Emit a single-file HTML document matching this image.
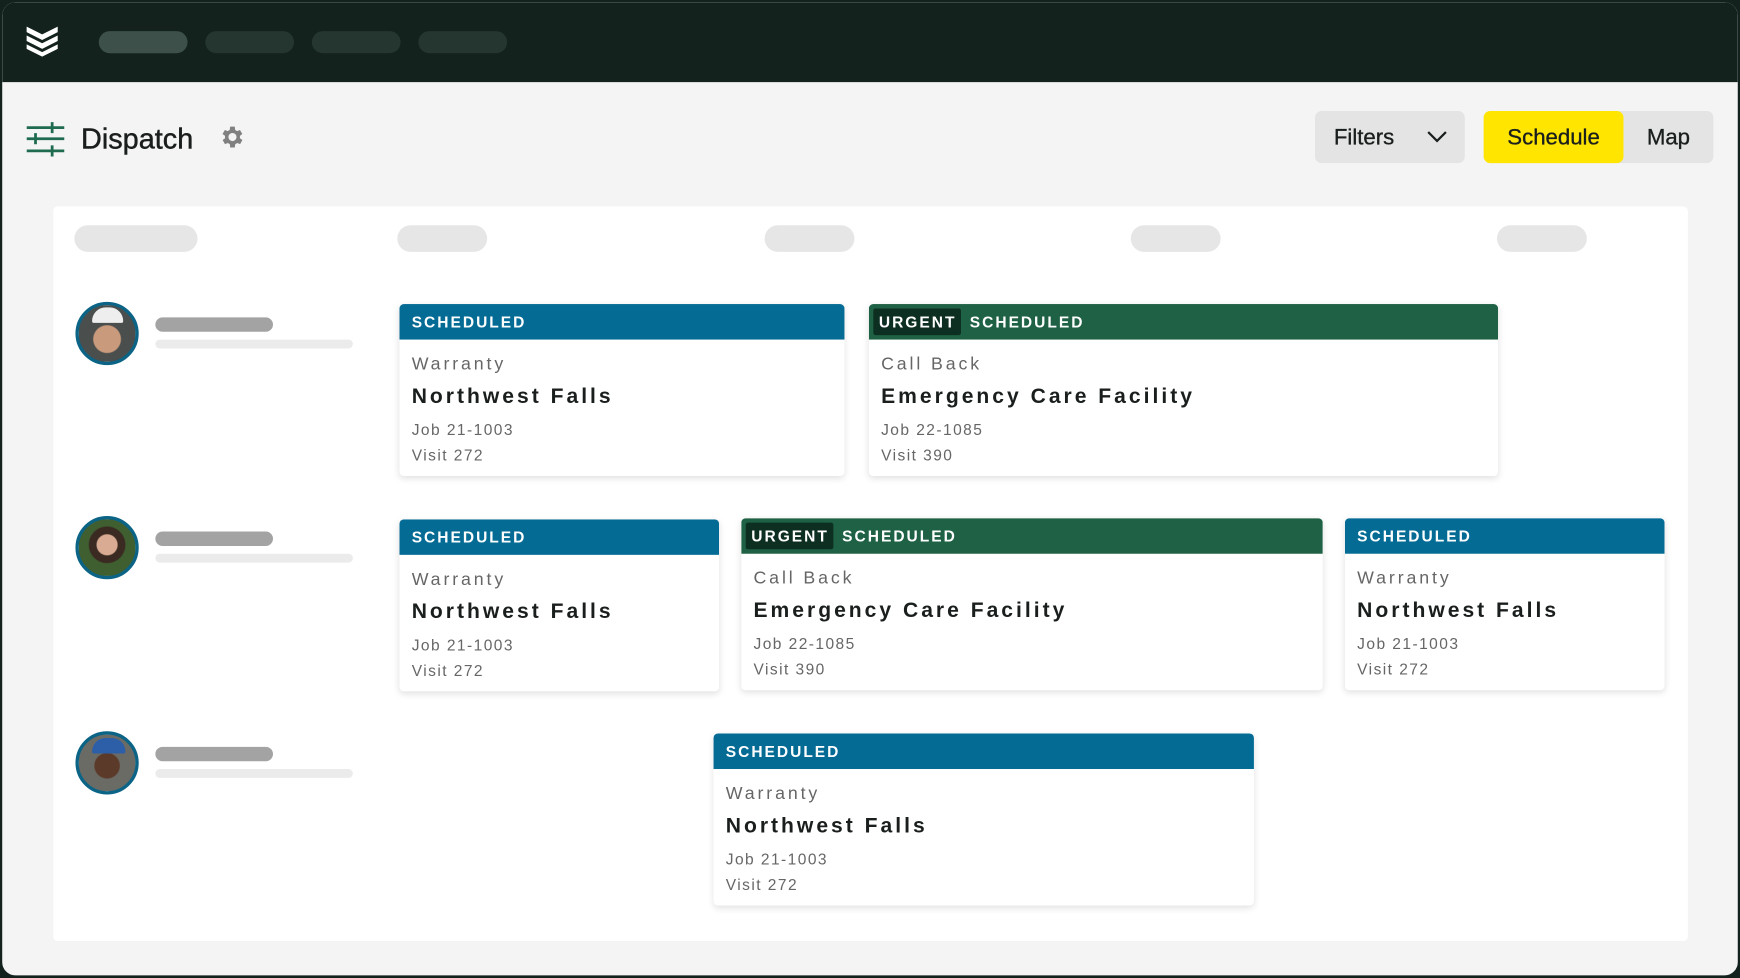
<!DOCTYPE html>
<html><head><meta charset="utf-8"><style>
*{margin:0;padding:0;box-sizing:border-box}
html,body{width:1740px;height:978px;overflow:hidden;background:#13221d}
#s{position:absolute;left:0;top:0;width:1568px;height:881px;transform:scale(1.10969);transform-origin:0 0;font-family:"Liberation Sans",sans-serif}
.win{position:absolute;left:0;top:0;width:1568px;height:881px;border-radius:14px;overflow:hidden;background:#f4f4f4;border:2px solid #13221d}
.top{position:absolute;left:0;top:0;width:100%;height:72px;background:#13221d}
.p{position:absolute;height:20px;border-radius:10px;background:#25352f;top:26px}
.a{position:absolute}
.panel{position:absolute;left:46px;top:184px;width:1473px;height:662px;background:#fff;border-radius:4px}
.sk{position:absolute;height:24px;border-radius:12px;background:#e6e6e6;top:201px}
.card{position:absolute;background:#fff;border-radius:4px;box-shadow:0 2px 6px rgba(0,0,0,.12);overflow:hidden}
.hd{height:32px;color:#fff;font-weight:bold;font-size:14px;letter-spacing:1.8px;line-height:32px;padding-left:11px}
.bl{background:#046b95}.gr{background:#1e6145;padding-left:4px}
.ug{display:inline-block;background:#0d2f22;height:24px;line-height:24px;padding:0 4px 0 5px;margin-right:8px;border-radius:2px;vertical-align:0px}
.t1{position:absolute;left:11px;top:46px;font-size:16px;color:#666;letter-spacing:2.6px}
.t2{position:absolute;left:11px;top:73px;font-size:19px;font-weight:bold;color:#1a1f1d;letter-spacing:2.7px}
.t3{position:absolute;left:11px;top:102px;font-size:14px;color:#666;letter-spacing:1.3px;line-height:23px}
.av{position:absolute;left:66px;width:57px;height:57px;border-radius:50%;border:3px solid #0b6486;overflow:hidden}
.b1{position:absolute;left:138px;width:106px;height:13px;border-radius:7px;background:#a3a3a3}
.b2{position:absolute;left:138px;width:178px;height:8px;border-radius:4px;background:#ebebeb}
.btn{position:absolute;top:98px;height:47px;font-size:20px;color:#1a1f1d;line-height:49px}
</style></head><body><div id="s"><div class="win">
<div class="top">
<svg class="a" style="left:21px;top:20px" width="30" height="30" viewBox="0 0 30 30"><g fill="#fff"><path d="M1 2 L15 9 L29 2 L29 7 L15 14 L1 7Z"/><path d="M1 10 L15 17 L29 10 L29 15 L15 22 L1 15Z"/><path d="M1 18 L15 25 L29 18 L29 22 L15 29 L1 22Z"/></g></svg>
<div class="p" style="left:87px;width:80px;background:#3e504a"></div>
<div class="p" style="left:183px;width:80px"></div>
<div class="p" style="left:279px;width:80px"></div>
<div class="p" style="left:375px;width:80px"></div>
</div>
<svg class="a" style="left:22px;top:106px" width="34" height="34" viewBox="0 0 34 34" stroke="#1e6b4f" stroke-width="2.5" fill="none"><path d="M0 7H34M0 17H34M0 28H34M23 2V12M8 12V22M23 23V33"/></svg>
<div class="a" style="left:71px;top:108px;font-size:26px;color:#1a1f1d;-webkit-text-stroke:0.4px #1a1f1d">Dispatch</div>
<svg class="a" style="left:195px;top:109px" width="25" height="25" viewBox="0 0 24 24"><path fill="#808080" d="M19.4 13a7.5 7.5 0 0 0 0-2l2.1-1.6-2-3.5-2.5 1a7 7 0 0 0-1.7-1L15 3h-4l-.4 2.9a7 7 0 0 0-1.7 1l-2.5-1-2 3.5L6.6 11a7.5 7.5 0 0 0 0 2l-2.1 1.6 2 3.5 2.5-1a7 7 0 0 0 1.7 1L11 21h4l.4-2.9a7 7 0 0 0 1.7-1l2.5 1 2-3.5zM13 15.5a3.5 3.5 0 1 1 0-7 3.5 3.5 0 0 1 0 7z" transform="translate(-1 0)"/></svg>
<div class="btn" style="left:1183px;width:135px;background:#e4e4e4;border-radius:6px;padding-left:17px;-webkit-text-stroke:0.3px #1a1f1d">Filters<svg class="a" style="left:101px;top:17px" width="18" height="12" viewBox="0 0 18 12"><path d="M1 2L9 10L17 2" stroke="#1a1f1d" stroke-width="2" fill="none"/></svg></div>
<div class="btn" style="left:1335px;width:207px;background:#e4e4e4;border-radius:6px"></div>
<div class="btn" style="left:1335px;width:126px;background:#ffe500;border-radius:6px;text-align:center;-webkit-text-stroke:0.3px #1a1f1d">Schedule</div>
<div class="btn" style="left:1461px;width:81px;text-align:center;-webkit-text-stroke:0.3px #1a1f1d">Map</div>
<div class="panel"></div>
<div class="sk" style="left:65px;width:111px"></div>
<div class="sk" style="left:356px;width:81px"></div>
<div class="sk" style="left:687px;width:81px"></div>
<div class="sk" style="left:1017px;width:81px"></div>
<div class="sk" style="left:1347px;width:81px"></div>

<div class="av" style="top:270px;background:radial-gradient(circle at 50% 60%,#c99a7c 0 12px,#4a4e4d 13px)"><div style="position:absolute;left:12px;top:2px;width:28px;height:14px;border-radius:14px 14px 2px 2px;background:#eee"></div></div>
<div class="b1" style="top:284px"></div><div class="b2" style="top:304px"></div>
<div class="av" style="top:463px;background:radial-gradient(circle at 50% 45%,#d8ab92 0 9px,#3a2a22 10px 16px,#3f5f30 17px)"></div>
<div class="b1" style="top:477px"></div><div class="b2" style="top:497px"></div>
<div class="av" style="top:657px;background:radial-gradient(circle at 50% 55%,#5b3a2a 0 11px,#6b6b66 12px)"><div style="position:absolute;left:12px;top:3px;width:30px;height:14px;border-radius:14px 14px 2px 2px;background:#2d5fa8"></div></div>
<div class="b1" style="top:671px"></div><div class="b2" style="top:691px"></div>

<div class="card" style="left:358px;top:272px;width:401px;height:155px"><div class="hd bl">SCHEDULED</div><div class="t1">Warranty</div><div class="t2">Northwest Falls</div><div class="t3">Job 21-1003<br>Visit 272</div></div>
<div class="card" style="left:781px;top:272px;width:567px;height:155px"><div class="hd gr"><span class="ug">URGENT</span>SCHEDULED</div><div class="t1">Call Back</div><div class="t2">Emergency Care Facility</div><div class="t3">Job 22-1085<br>Visit 390</div></div>

<div class="card" style="left:358px;top:466px;width:288px;height:155px"><div class="hd bl">SCHEDULED</div><div class="t1">Warranty</div><div class="t2">Northwest Falls</div><div class="t3">Job 21-1003<br>Visit 272</div></div>
<div class="card" style="left:666px;top:465px;width:524px;height:155px"><div class="hd gr"><span class="ug">URGENT</span>SCHEDULED</div><div class="t1">Call Back</div><div class="t2">Emergency Care Facility</div><div class="t3">Job 22-1085<br>Visit 390</div></div>
<div class="card" style="left:1210px;top:465px;width:288px;height:155px"><div class="hd bl">SCHEDULED</div><div class="t1">Warranty</div><div class="t2">Northwest Falls</div><div class="t3">Job 21-1003<br>Visit 272</div></div>

<div class="card" style="left:641px;top:659px;width:487px;height:155px"><div class="hd bl">SCHEDULED</div><div class="t1">Warranty</div><div class="t2">Northwest Falls</div><div class="t3">Job 21-1003<br>Visit 272</div></div>
</div></div></body></html>
